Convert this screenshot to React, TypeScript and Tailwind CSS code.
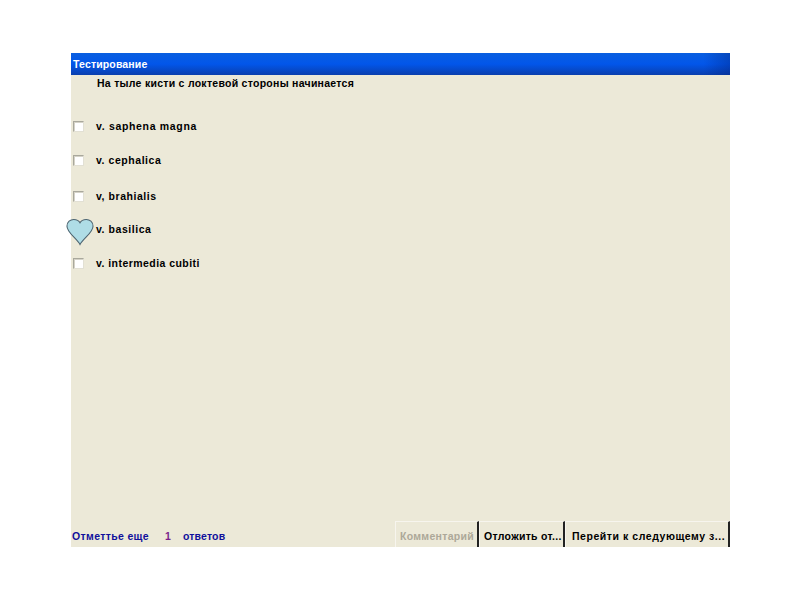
const font = "font-['Liberation_Sans',Arial,sans-serif]";

function Check() {
  return (
    <span className="block w-[11px] h-[11px] mb-[2px] bg-white border border-[#a9a89c] border-r-[#e2e0d4] border-b-[#e2e0d4] shadow-[inset_1px_1px_0_#d5d3c8]" />
  );
}

function Heart() {
  return (
    <svg className="absolute left-[-5px] top-[-7px]" width="28" height="28" viewBox="0 0 29 29">
      <path
        d="M14.5 27.5 C11 21 1 15 1 8.5 C1 4 4.5 1.5 8 1.5 C11 1.5 13.5 3 14.5 5 C15.5 3 18 1.5 21 1.5 C24.5 1.5 28 4 28 8.5 C28 15 18 21 14.5 27.5 Z"
        fill="#afdde6"
        stroke="#4d6470"
        strokeWidth="1.1"
      />
    </svg>
  );
}

function Row({ label, mb, track, heart }: { label: string; mb: string; track: string; heart?: boolean }) {
  return (
    <div className={`flex items-center h-5 ${mb}`}>
      <div className="relative w-[25px] pl-[2px] shrink-0">
        {heart ? <div className="w-[11px] h-[11px]" /> : <Check />}
        {heart && <Heart />}
      </div>
      <span className={`text-[10.5px] font-bold text-black ${track}`}>{label}</span>
    </div>
  );
}

function Btn({ label, w, pl, track, disabled }: { label: string; w: string; pl: string; track: string; disabled?: boolean }) {
  return (
    <div
      className={`${w} ${pl} h-[26px] pt-[4px] flex items-center border-r-2 border-[#222] border-t border-t-[#f7f5ee] border-l border-l-[#f7f5ee] text-[10.5px] font-bold whitespace-nowrap ${track} ${
        disabled ? "text-[#aca899]" : "text-black"
      }`}
    >
      {label}
    </div>
  );
}

export default function App() {
  return (
    <div className={`w-[800px] h-[600px] bg-white pt-[53px] pl-[71px] ${font}`}>
      <div className="w-[659px] h-[494px] bg-[#ece9d8] flex flex-col">
        <div className="h-[22px] shrink-0 flex items-center pl-[2px] pt-[2px] bg-[linear-gradient(90deg,transparent_96%,rgba(0,30,120,0.35)),linear-gradient(180deg,#0a5fe0,#0256ea_50%,#0a3fae)] text-white text-[10.5px] font-bold tracking-[0.15px]">
          Тестирование
        </div>
        <div className="h-[34px] shrink-0 pl-[26px] pt-[1px] text-[10.5px] font-bold tracking-[0.27px] text-black">
          На тыле кисти с локтевой стороны начинается
        </div>
        <div className="flex flex-col pt-[8px]">
          <Row label="v. saphena magna" mb="mb-[14px]" track="tracking-[0.67px]" />
          <Row label="v. cephalica" mb="mb-[16px]" track="tracking-[0.55px]" />
          <Row label="v, brahialis" mb="mb-[13px]" track="tracking-[0.55px]" />
          <Row label="v. basilica" mb="mb-[14px]" track="tracking-[0.55px]" heart />
          <Row label="v. intermedia cubiti" track="tracking-[0.45px]" mb="mb-0" />
        </div>
        <div className="mt-auto h-[26px] flex items-stretch justify-between">
          <div className="flex items-center pt-[5px] pl-[1px] text-[10.5px] font-bold text-[#10109c]">
            <span className="w-[93px] tracking-[0.35px]">Отметтье еще</span>
            <span className="w-[18px] text-[#7a1f8a]">1</span>
            <span className="tracking-[0.15px]">ответов</span>
          </div>
          <div className="flex">
            <Btn label="Комментарий" w="w-[84px]" pl="pl-[4px]" track="tracking-[0.3px]" disabled />
            <Btn label="Отложить от..." w="w-[86px]" pl="pl-[4px]" track="tracking-[0.3px]" />
            <Btn label="Перейти к следующему з..." w="w-[165px]" pl="pl-[6px]" track="tracking-[0.55px]" />
          </div>
        </div>
      </div>
    </div>
  );
}
